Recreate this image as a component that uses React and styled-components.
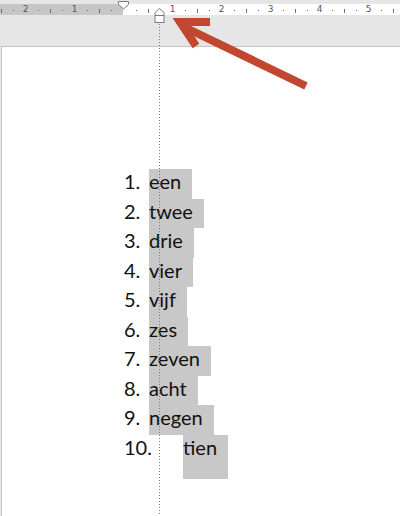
import React from "react";
import styled, { createGlobalStyle } from "styled-components";

const Global = createGlobalStyle`
  html, body { margin: 0; padding: 0; background: #e6e6e6; }
  body { width: 400px; height: 516px; overflow: hidden; }
`;

const Window = styled.div`
  position: relative;
  width: 400px;
  height: 516px;
  overflow: hidden;
  background: #e6e6e6;
  display: flex;
  flex-direction: column;
  font-family: Lato, "Open Sans", sans-serif;
`;

const RulerArea = styled.div`
  height: 46px;
  flex: none;
  padding-top: 4px;
  box-sizing: border-box;
`;

const Ruler = styled.div`
  position: relative;
  height: 11px;
  display: flex;
`;

const RulerMargin = styled.div`
  width: 123px;
  background: #c6c6c6;
`;

const RulerText = styled.div`
  flex: 1;
  background: #ffffff;
`;

const Tick = styled.span`
  position: absolute;
  width: 1px;
  background: #6d6d6d;
  top: ${(p) => (p.$major ? "5px" : "6px")};
  height: ${(p) => (p.$major ? "4px" : "1px")};
`;

const RulerNum = styled.span`
  position: absolute;
  top: -1px;
  width: 10px;
  margin-left: -5px;
  text-align: center;
  font-family: "DejaVu Sans", sans-serif;
  font-size: 9px;
  line-height: 12px;
  color: #555;
`;

const Marker = styled.svg`
  position: absolute;
  overflow: visible;
`;

const Page = styled.div`
  flex: 1;
  margin-left: 1px;
  background: #fff;
  border-top: 1px solid #c6c6c6;
  border-left: 1px solid #c6c6c6;
`;

const List = styled.ol`
  list-style: none;
  margin: 0;
  padding: 122px 0 0 122px;
`;

const Item = styled.li`
  display: flex;
  align-items: flex-start;
  font-size: 20px;
  line-height: 24px;
  color: #111;
`;

const Num = styled.span`
  width: ${(p) => (p.$tab ? "59px" : "25px")};
  flex: none;
`;

const Mark = styled.span`
  background: #c8c8c8;
  padding-right: 11px;
  padding-bottom: ${(p) => (p.$last ? "20px" : "5.5px")};
`;

const Guide = styled.div`
  position: absolute;
  left: 159px;
  top: 24px;
  bottom: 0;
  width: 1px;
  background: repeating-linear-gradient(
    to bottom,
    #7a7a7a 0 1px,
    transparent 1px 3px
  );
`;

const Arrow = styled.svg`
  position: absolute;
  left: 0;
  top: 0;
  pointer-events: none;
`;

const words = ["een", "twee", "drie", "vier", "vijf", "zes", "zeven", "acht", "negen", "tien"];

const zero = 123.5;
const step = 12.25;
const ticks = [];
for (let k = -10; k <= 22; k++) {
  const x = zero + k * step;
  if (x < -2 || x > 402) continue;
  if (k % 4 === 0) {
    if (k !== 0) ticks.push({ type: "num", x, label: String(Math.abs(k / 4)) });
  } else {
    ticks.push({ type: k % 2 === 0 ? "line" : "dot", x });
  }
}

export default function App() {
  return (
    <Window>
      <Global />
      <RulerArea>
        <Ruler>
          <RulerMargin />
          <RulerText />
          {ticks.map((t, i) =>
            t.type === "num" ? (
              <RulerNum key={i} style={{ left: t.x }}>
                {t.label}
              </RulerNum>
            ) : (
              <Tick key={i} $major={t.type === "line"} style={{ left: Math.round(t.x) }} />
            )
          )}
          <Marker width="11" height="9" style={{ left: 118, top: -3 }} viewBox="0 0 11 9">
            <path d="M0.5 0.5 H10.5 V3.5 L5.5 8 L0.5 3.5 Z" fill="#fff" stroke="#7a7a7a" />
          </Marker>
          <Marker width="11" height="16" style={{ left: 154, top: 4 }} viewBox="0 0 11 16">
            <path d="M5.5 0.5 L10 4.5 V7.5 H1 V4.5 Z" fill="#fff" stroke="#7a7a7a" />
            <rect x="1" y="7.5" width="9" height="7" fill="#fff" stroke="#7a7a7a" />
          </Marker>
        </Ruler>
      </RulerArea>
      <Page>
        <List>
          {words.map((w, i) => (
            <Item key={w}>
              <Num $tab={i === 9}>{i + 1}.</Num>
              <Mark $last={i === 9}>{w}</Mark>
            </Item>
          ))}
        </List>
      </Page>
      <Guide />
      <Arrow width="400" height="516" viewBox="0 0 400 516">
        <g stroke="#c1472f" strokeWidth="8" fill="none">
          <polyline points="210,22 180,22 196,46" strokeLinejoin="miter" strokeMiterlimit="10" />
          <line x1="182" y1="26" x2="306" y2="86" />
        </g>
      </Arrow>
    </Window>
  );
}
